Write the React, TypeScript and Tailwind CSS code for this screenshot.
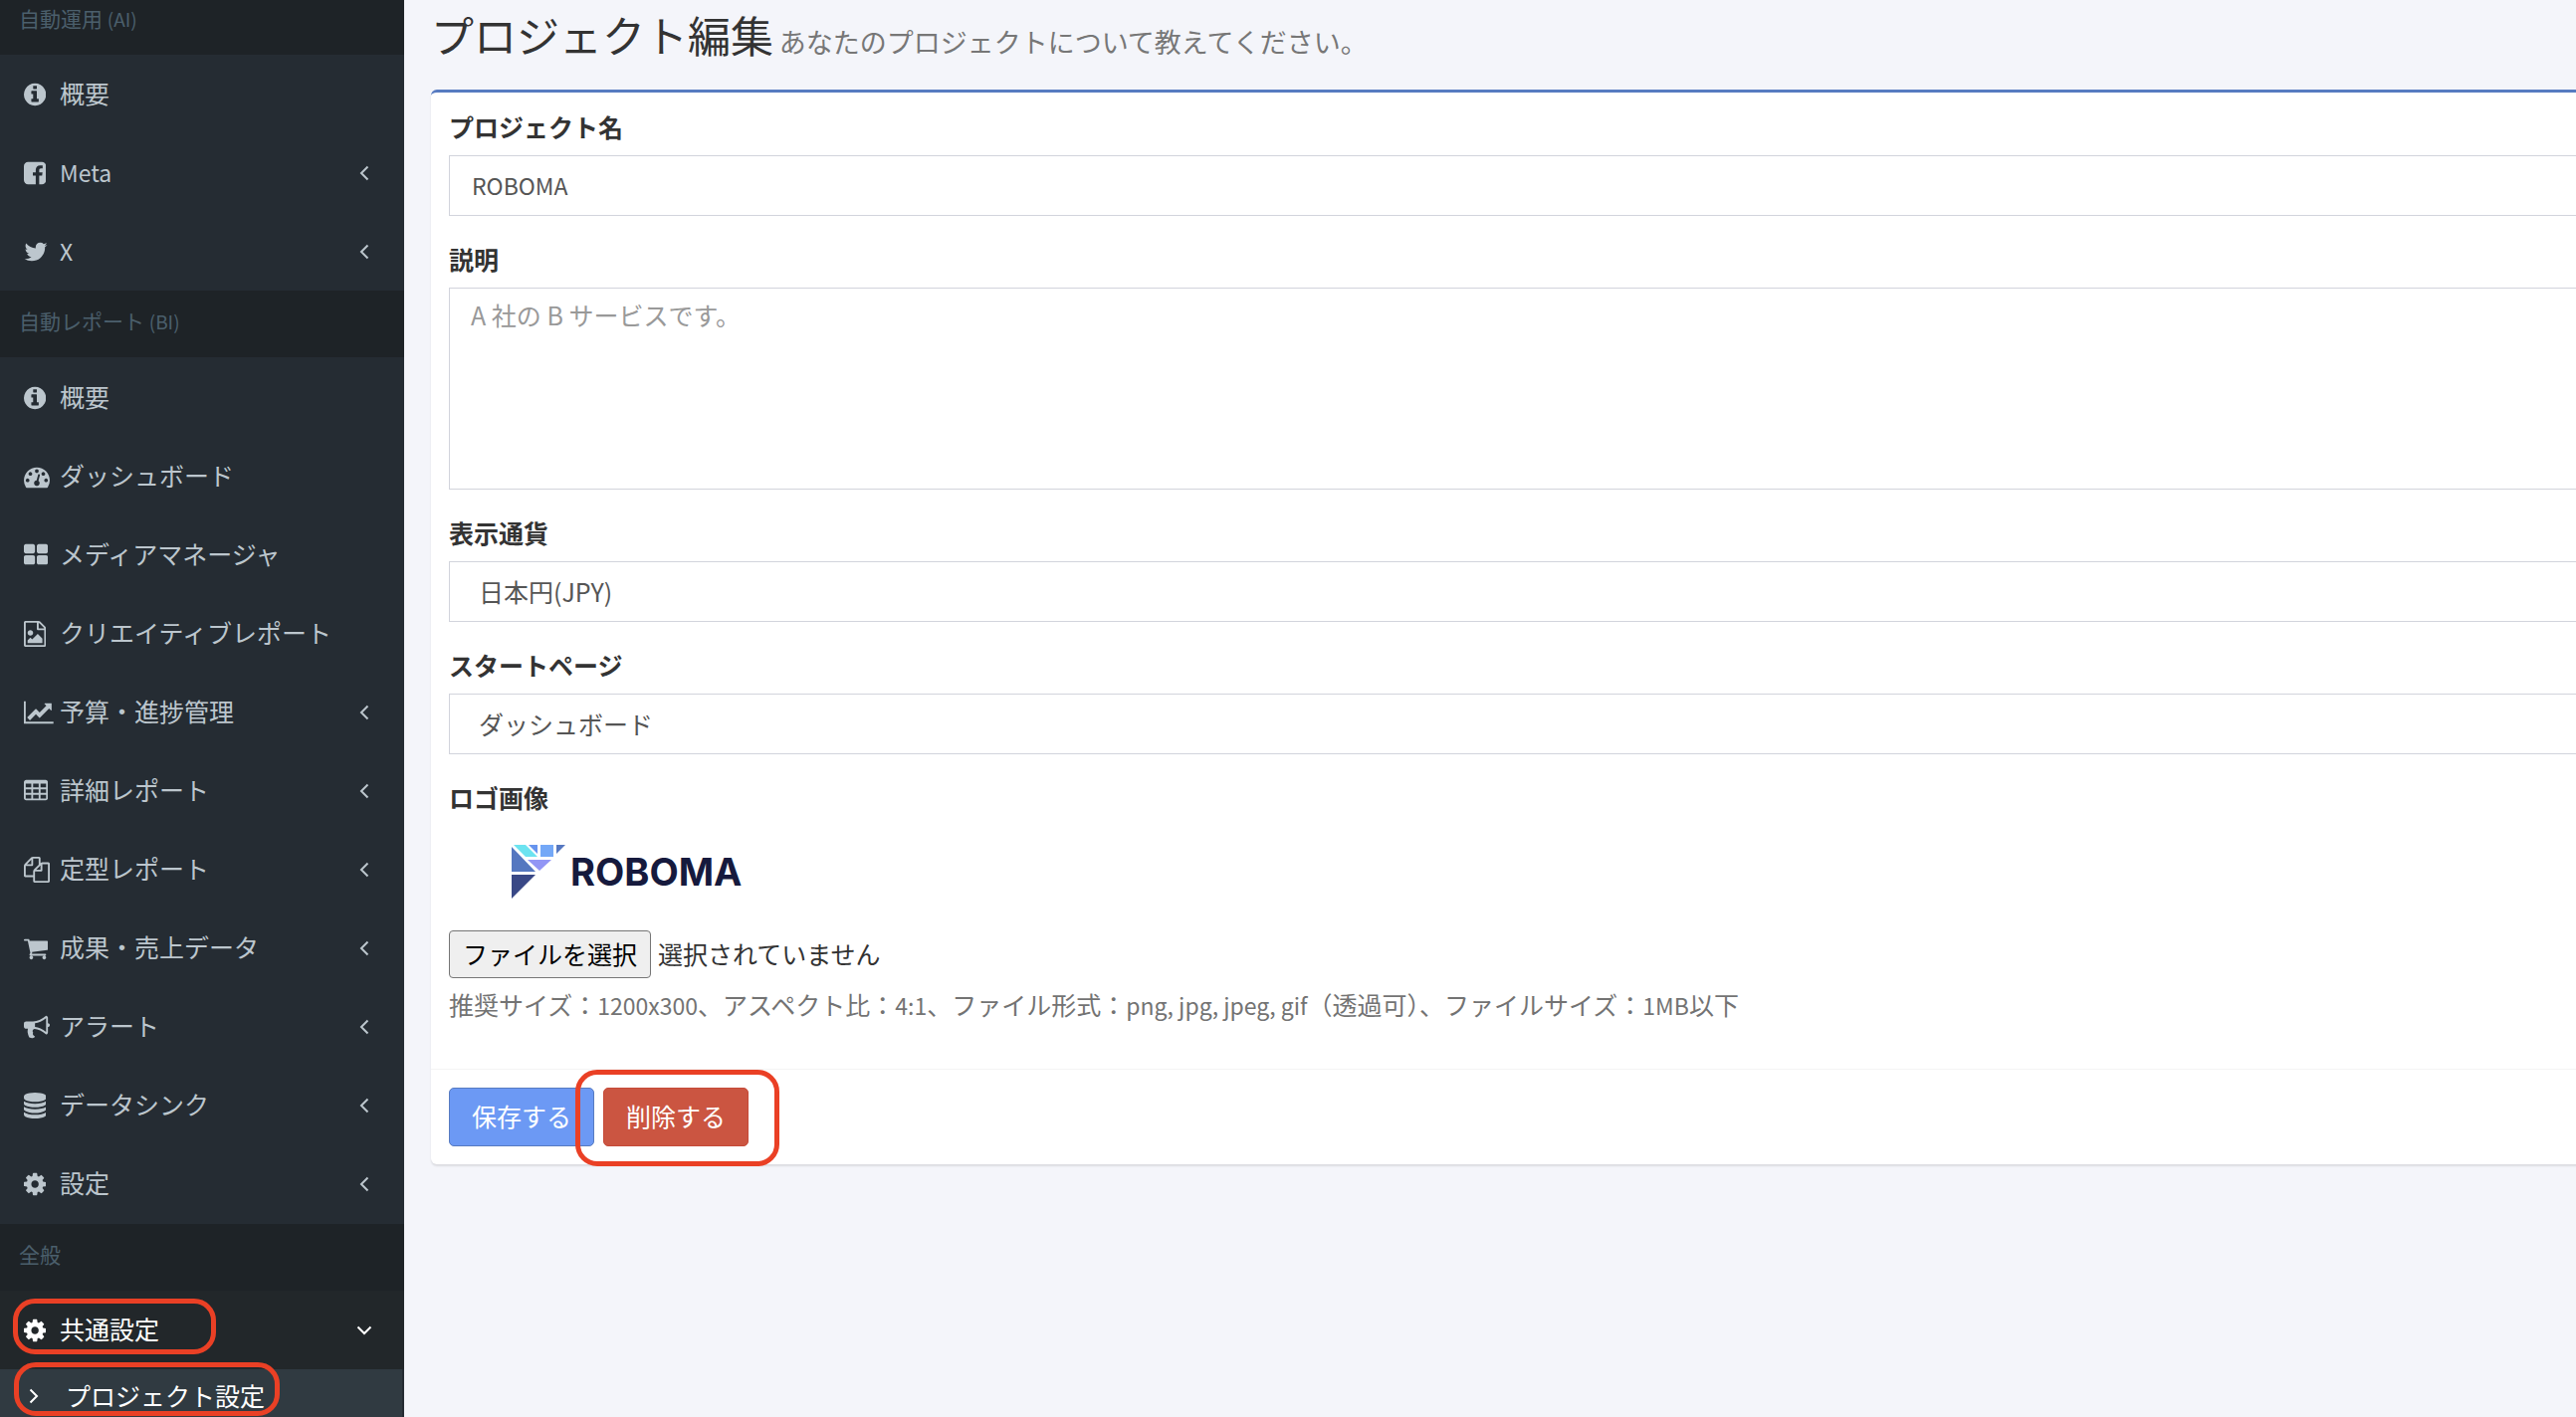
import type { ReactNode } from "react";

type IconName = keyof typeof icons;

type MenuItem = {
  icon: IconName;
  label: string;
  latin?: boolean;
  children?: boolean;
};

// [viewBox x, viewBox width, path], all of them on a 1792 high grid
const icons = {
  info: [128, 1536, "M1152 1376v-160q0-14-9-23t-23-9h-96v-512q0-14-9-23t-23-9h-320q-14 0-23 9t-9 23v160q0 14 9 23t23 9h96v320h-96q-14 0-23 9t-9 23v160q0 14 9 23t23 9h448q14 0 23-9t9-23zm-128-896v-160q0-14-9-23t-23-9h-192q-14 0-23 9t-9 23v160q0 14 9 23t23 9h192q14 0 23-9t9-23zm640 416q0 209-103 385.5t-279.5 279.5-385.5 103-385.5-103-279.5-279.5-103-385.5 103-385.5 279.5-279.5 385.5-103 385.5 103 279.5 279.5 103 385.5z"],
  facebook: [128, 1536, "M1376 128q119 0 203.5 84.5t84.5 203.5v960q0 119-84.5 203.5t-203.5 84.5h-188v-595h199l30-232h-229v-148q0-56 23.5-84t91.5-28l122-1v-207q-63-9-178-9-136 0-217.5 80t-81.5 226v171h-200v232h200v595h-532q-119 0-203.5-84.5t-84.5-203.5v-960q0-119 84.5-203.5t203.5-84.5h960z"],
  twitter: [64, 1664, "M1684 408q-67 98-162 167 1 14 1 42 0 130-38 259.5t-115.5 248.5-184.5 210.5-258 146-323 54.5q-271 0-496-145 35 4 78 4 225 0 401-138-105-2-188-64.5t-114-159.5q33 5 61 5 43 0 85-11-112-23-185.5-111.5t-73.5-205.5v-4q68 38 146 41-66-44-105-115t-39-154q0-88 44-163 121 149 294.5 238.5t371.5 99.5q-8-38-8-74 0-134 94.5-228.5t228.5-94.5q140 0 236 102 109-21 205-78-37 115-142 178 93-10 186-50z"],
  dashboard: [0, 1792, "M384 1152q0-53-37.5-90.5t-90.5-37.5-90.5 37.5-37.5 90.5 37.5 90.5 90.5 37.5 90.5-37.5 37.5-90.5zm192-448q0-53-37.5-90.5t-90.5-37.5-90.5 37.5-37.5 90.5 37.5 90.5 90.5 37.5 90.5-37.5 37.5-90.5zm428 481l101-382q6-26-7.5-48.5t-38.5-29.5-48 6.5-30 39.5l-101 382q-60 5-107 43.5t-63 98.5q-20 77 20 146t117 89 146-20 89-117q16-60-6-117t-72-91zm660-33q0-53-37.5-90.5t-90.5-37.5-90.5 37.5-37.5 90.5 37.5 90.5 90.5 37.5 90.5-37.5 37.5-90.5zm-640-640q0-53-37.5-90.5t-90.5-37.5-90.5 37.5-37.5 90.5 37.5 90.5 90.5 37.5 90.5-37.5 37.5-90.5zm448 192q0-53-37.5-90.5t-90.5-37.5-90.5 37.5-37.5 90.5 37.5 90.5 90.5 37.5 90.5-37.5 37.5-90.5zm320 448q0 261-141 483-19 29-54 29h-1402q-35 0-54-29-141-221-141-483 0-182 71-348t191-286 286-191 348-71 348 71 286 191 191 286 71 348z"],
  thLarge: [64, 1664, "M832 1024v384q0 52-38 90t-90 38h-512q-52 0-90-38t-38-90v-384q0-52 38-90t90-38h512q52 0 90 38t38 90zm0-768v384q0 52-38 90t-90 38h-512q-52 0-90-38t-38-90v-384q0-52 38-90t90-38h512q52 0 90 38t38 90zm896 768v384q0 52-38 90t-90 38h-512q-52 0-90-38t-38-90v-384q0-52 38-90t90-38h512q52 0 90 38t38 90zm0-768v384q0 52-38 90t-90 38h-512q-52 0-90-38t-38-90v-384q0-52 38-90t90-38h512q52 0 90 38t38 90z"],
  fileImage: [128, 1536, "M1596 380q28 28 48 76t20 88v1152q0 40-28 68t-68 28h-1344q-40 0-68-28t-28-68v-1600q0-40 28-68t68-28h896q40 0 88 20t76 48zm-444-244v376h376q-10-29-22-41l-313-313q-12-12-41-22zm384 1528v-1024h-416q-40 0-68-28t-28-68v-416h-768v1536h1280zm-128-448v320h-1024v-192l192-192 128 128 384-384zm-832-192q-80 0-136-56t-56-136 56-136 136-56 136 56 56 136-56 136-136 56z"],
  lineChart: [0, 2048, "M2048 1536v128h-2048v-1536h128v1408h1920zm-128-1248v435q0 21-19.5 29.5t-35.5-7.5l-121-121-633 633q-10 10-23 10t-23-10l-233-233-416 416-192-192 585-585q10-10 23-10t23 10l233 233 464-464-121-121q-16-16-7.5-35.5t29.5-19.5h435q14 0 23 9t9 23z"],
  table: [64, 1664, "M1728 288v1088q0 66-47 113t-113 47h-1344q-66 0-113-47t-47-113v-1088q0-66 47-113t113-47h1344q66 0 113 47t47 113zM192 384v256h384v-256zM704 384v256h384v-256zM1216 384v256h384v-256zM192 768v256h384v-256zM704 768v256h384v-256zM1216 768v256h384v-256zM192 1152v256h384v-256zM704 1152v256h384v-256zM1216 1152v256h384v-256z"],
  files: [0, 1792, "M1696 384q40 0 68 28t28 68v1216q0 40-28 68t-68 28h-960q-40 0-68-28t-28-68v-288h-544q-40 0-68-28t-28-68v-672q0-40 20-88t48-76l408-408q28-28 76-48t88-20h416q40 0 68 28t28 68v328q68-40 128-40h416zm-544 213l-299 299h299v-299zm-640-384l-299 299h299v-299zm196 647l316-316v-416h-384v416q0 40-28 68t-68 28h-416v640h512v-256q0-40 20-88t48-76zm956 804v-1152h-384v416q0 40-28 68t-68 28h-416v640h896z"],
  cart: [64, 1664, "M704 1536q0 52-38 90t-90 38-90-38-38-90 38-90 90-38 90 38 38 90zm896 0q0 52-38 90t-90 38-90-38-38-90 38-90 90-38 90 38 38 90zm128-1088v512q0 24-16.5 42.5t-40.5 21.5l-1044 122q13 60 13 70 0 16-24 64h920q26 0 45 19t19 45-19 45-45 19h-1024q-26 0-45-19t-19-45q0-11 8-31.5t16-36 21.5-40 15.5-29.5l-177-823h-204q-26 0-45-19t-19-45 19-45 45-19h256q16 0 28.5 6.5t19.5 15.5 13 24.5 8 26 5.5 29.5 4.5 26h1201q26 0 45 19t19 45z"],
  bullhorn: [0, 1792, "M1664 640q53 0 90.5 37.5t37.5 90.5-37.5 90.5-90.5 37.5v384q0 52-38 90t-90 38q-417-347-812-380-58 19-91 66t-31 100.5 40 92.5q-20 33-23 65.5t6 58 33.5 55 48 50 61.5 50.5q-29 58-111.5 83t-168.5 11.5-132-55.5q-7-23-29.5-87.5t-32-94.5-23-89-15-101 3.5-98.5 22-110.5h-122q-66 0-113-47t-47-113v-192q0-66 47-113t113-47h480q435 0 896-384 52 0 90 38t38 90v384zm-128 604v-954q-394 302-768 343v270q377 42 768 341z"],
  database: [128, 1536, "M896 768q237 0 443-43t325-127v170q0 69-103 128t-280 93.5-385 34.5-385-34.5-280-93.5-103-128v-170q119 84 325 127t443 43zm0 768q237 0 443-43t325-127v170q0 69-103 128t-280 93.5-385 34.5-385-34.5-280-93.5-103-128v-170q119 84 325 127t443 43zm0-384q237 0 443-43t325-127v170q0 69-103 128t-280 93.5-385 34.5-385-34.5-280-93.5-103-128v-170q119 84 325 127t443 43zm0-1152q208 0 385 34.5t280 93.5 103 128v128q0 69-103 128t-280 93.5-385 34.5-385-34.5-280-93.5-103-128v-128q0-69 103-128t280-93.5 385-34.5z"],
  cog: [128, 1536, "M1152 896q0-106-75-181t-181-75-181 75-75 181 75 181 181 75 181-75 75-181zm512-109v222q0 12-8 23t-20 13l-185 28q-19 54-39 91 35 50 107 138 10 12 10 25t-9 23q-27 37-99 108t-94 71q-12 0-26-9l-138-108q-44 23-91 38-16 136-29 186-7 28-36 28h-222q-14 0-24.5-8.5t-11.5-21.5l-28-184q-49-16-90-37l-141 107q-10 9-25 9-14 0-25-11-126-114-165-168-7-10-7-23 0-12 8-23 15-21 51-66.5t54-70.5q-27-50-41-99l-183-27q-13-2-21-12.5t-8-23.5v-222q0-12 8-23t19-13l186-28q14-46 39-92-40-57-107-138-10-12-10-24 0-10 9-23 26-36 98.5-107.5t94.5-71.5q13 0 26 10l138 107q44-23 91-38 16-136 29-186 7-28 36-28h222q14 0 24.5 8.5t11.5 21.5l28 184q49 16 90 37l142-107q9-9 24-9 13 0 25 10 129 119 165 170 7 8 7 22 0 12-8 23-15 21-51 66.5t-54 70.5q26 50 41 98l183 28q13 2 21 12.5t8 23.5z"],
} as const;

const aiMenu: MenuItem[] = [
  { icon: "info", label: "概要" },
  { icon: "facebook", label: "Meta", latin: true, children: true },
  { icon: "twitter", label: "X", latin: true, children: true },
];

const biMenu: MenuItem[] = [
  { icon: "info", label: "概要" },
  { icon: "dashboard", label: "ダッシュボード" },
  { icon: "thLarge", label: "メディアマネージャ" },
  { icon: "fileImage", label: "クリエイティブレポート" },
  { icon: "lineChart", label: "予算・進捗管理", children: true },
  { icon: "table", label: "詳細レポート", children: true },
  { icon: "files", label: "定型レポート", children: true },
  { icon: "cart", label: "成果・売上データ", children: true },
  { icon: "bullhorn", label: "アラート", children: true },
  { icon: "database", label: "データシンク", children: true },
  { icon: "cog", label: "設定", children: true },
];

const Icon = ({ name }: { name: IconName }) => {
  const [x, width, path] = icons[name];
  return (
    <span className="flex w-9 shrink-0">
      <svg
        viewBox={`${x} 0 ${width} 1792`}
        className="h-[26px] w-auto"
        fill="currentColor"
        fillRule={name === "table" ? "evenodd" : "nonzero"}
        aria-hidden="true"
      >
        <path d={path} />
      </svg>
    </span>
  );
};

const Angle = ({ className = "" }: { className?: string }) => (
  <svg viewBox="0 0 16 16" className={`size-4 shrink-0 ${className}`} fill="none" stroke="currentColor" strokeWidth="2" aria-hidden="true">
    <path d="M11.5 1.5 5 8l6.5 6.5" />
  </svg>
);

// Latin letters run smaller than the Japanese ones beside them
const Latin = ({ children }: { children: ReactNode }) => (
  <span className="text-[23px]">{children}</span>
);

const MenuHeader = ({ children }: { children: ReactNode }) => (
  <h2 className="bg-[#1e2327] pt-[15px] pb-[21px] pl-[19px] text-[21px] leading-[31px] text-[#4b5f6c]">
    {children}
  </h2>
);

const MenuList = ({ items }: { items: MenuItem[] }) => (
  <ul>
    {items.map((item, idx) => (
      <li key={idx}>
        <a href="#" className="flex h-[79px] items-center pr-8 pl-6 text-[#bcc6cd]">
          <Icon name={item.icon} />
          <span className="flex-1 pb-[3px]">{item.latin ? <Latin>{item.label}</Latin> : item.label}</span>
          {item.children && <Angle />}
        </a>
      </li>
    ))}
  </ul>
);

const Sidebar = () => (
  <nav className="-mt-3 w-[406px] shrink-0 bg-[#252c33]">
    <MenuHeader>
      自動運用 <span className="text-[19px]">(AI)</span>
    </MenuHeader>
    <MenuList items={aiMenu} />
    <MenuHeader>
      自動レポート <span className="text-[19px]">(BI)</span>
    </MenuHeader>
    <div className="py-px">
      <MenuList items={biMenu} />
    </div>
    <MenuHeader>全般</MenuHeader>
    <div className="relative">
      <a href="#" className="flex h-[79px] items-center bg-[#22272a] pr-8 pl-6 text-white">
        <Icon name="cog" />
        <span className="flex-1 pb-[3px]">共通設定</span>
        <Angle className="-rotate-90" />
      </a>
      <div className="absolute top-2 left-[13px] h-14 w-[204px] rounded-[22px] border-5 border-[#ea4025]" />
    </div>
    <div className="relative mr-0.5 bg-[#303a41]">
      <a href="#" className="flex h-[54px] items-center pl-[26px] text-white">
        <Angle className="rotate-180" />
        <span className="pb-[3px] pl-6">プロジェクト設定</span>
      </a>
      <div className="absolute -top-[7px] left-[14px] h-[54px] w-[267px] rounded-[22px] border-5 border-[#ea4025]" />
    </div>
  </nav>
);

const Logo = () => (
  <div className="flex items-center gap-[5px] pt-7 pb-8 pl-[63px]">
    <svg viewBox="0 0 54 54" className="size-[54px]" aria-hidden="true">
      <path d="M0 2 24 27H0z" fill="#5577c0" />
      <path d="M0 30h24L0 54z" fill="#394886" />
      <path d="M2 0h12l12 12H14z" fill="#6ce3f0" />
      <path d="M17 0h9v9z" fill="#6694ee" />
      <path d="M29 0h13v12H29z" fill="#74a8f7" />
      <path d="M45 0h9l-9 9z" fill="#5577c0" />
      <path d="M16 15h24L28 26z" fill="#9296f5" />
    </svg>
    <span className="font-[Inter,sans-serif] text-[38px] leading-[54px] font-bold text-[#161a3d]">ROBOMA</span>
  </div>
);

const Field = ({ id, label, children }: { id: string; label: string; children: ReactNode }) => (
  <div className="mb-[27px]">
    <label htmlFor={id} className="mb-3 block leading-[33px] font-bold text-[#333]">
      {label}
    </label>
    {children}
  </div>
);

const App = () => {
  return (
    <div className="flex h-screen overflow-hidden bg-[#f4f5fa] font-['Noto_Sans_CJK_JP',sans-serif] text-[25px] leading-9 text-[#333]">
      <Sidebar />

      <main className="min-w-0 flex-1 pl-[27px]">
        <h1 className="h-[90px] text-[43px] leading-[68px] whitespace-nowrap">
          プロジェクト編集 <small className="-ml-1 text-[27px] text-[#777]">あなたのプロジェクトについて教えてください。</small>
        </h1>

        {/* The box runs on past the right edge of the window */}
        <form className="-mr-10 rounded-md border-t-3 border-[#577bc1] bg-white shadow-[0_2px_2px_rgba(0,0,0,0.1)]">
          <div className="px-[18px] pt-[18px] pb-[45px]">
            <Field id="name" label="プロジェクト名">
              <input
                id="name"
                type="text"
                defaultValue="ROBOMA"
                className="block h-[61px] w-full border border-[#d2d4dc] bg-white px-[22px] pb-0.5 text-[23px] text-[#555]"
              />
            </Field>

            <Field id="description" label="説明">
              <textarea
                id="description"
                placeholder="A 社の B サービスです。"
                className="block h-[203px] w-full resize-none border border-[#d2d4dc] bg-white px-[21px] py-2 text-[#555] placeholder:text-[#999]"
              />
            </Field>

            <Field id="currency" label="表示通貨">
              <select id="currency" className="block h-[61px] w-full appearance-none border border-[#d2d4dc] bg-white px-[29px] pb-0.5 text-[#555]">
                <option>日本円(JPY)</option>
              </select>
            </Field>

            <Field id="start" label="スタートページ">
              <select id="start" className="block h-[61px] w-full appearance-none border border-[#d2d4dc] bg-white px-[29px] pb-0.5 text-[#555]">
                <option>ダッシュボード</option>
              </select>
            </Field>

            <h3 className="pb-[3px] leading-[33px] font-bold">ロゴ画像</h3>
            <Logo />
            <div className="flex items-center gap-[7px]">
              <label htmlFor="logo" className="rounded-sm border border-[#767676] bg-[#efefef] px-[13px] pt-1 pb-1.5 text-black">
                ファイルを選択
              </label>
              <input id="logo" type="file" className="sr-only" />
              <span className="pb-0.5">選択されていません</span>
            </div>
            <p className="mt-2 mb-px text-[#737373]">
              推奨サイズ：<Latin>1200x300</Latin>、アスペクト比：<Latin>4:1</Latin>、ファイル形式：<Latin>png, jpg, jpeg, gif</Latin>（透過可）、ファイルサイズ：<Latin>1MB</Latin>以下
            </p>
          </div>

          <div className="flex gap-[9px] border-t border-[#f4f4f4] p-[18px]">
            <button type="button" className="h-[59px] rounded-[5px] border border-[#577bc1] bg-[#6c99f4] px-[22px] pb-1 text-white">
              保存する
            </button>
            <div className="relative">
              <button type="button" className="h-[59px] rounded-[5px] border border-[#c64a38] bg-[#cb5541] px-[22px] pb-1 text-white">
                削除する
              </button>
              <div className="absolute -top-[18px] -left-7 h-[97px] w-[205px] rounded-[22px] border-5 border-[#ea4025]" />
            </div>
          </div>
        </form>
      </main>
    </div>
  );
};

export default App;
